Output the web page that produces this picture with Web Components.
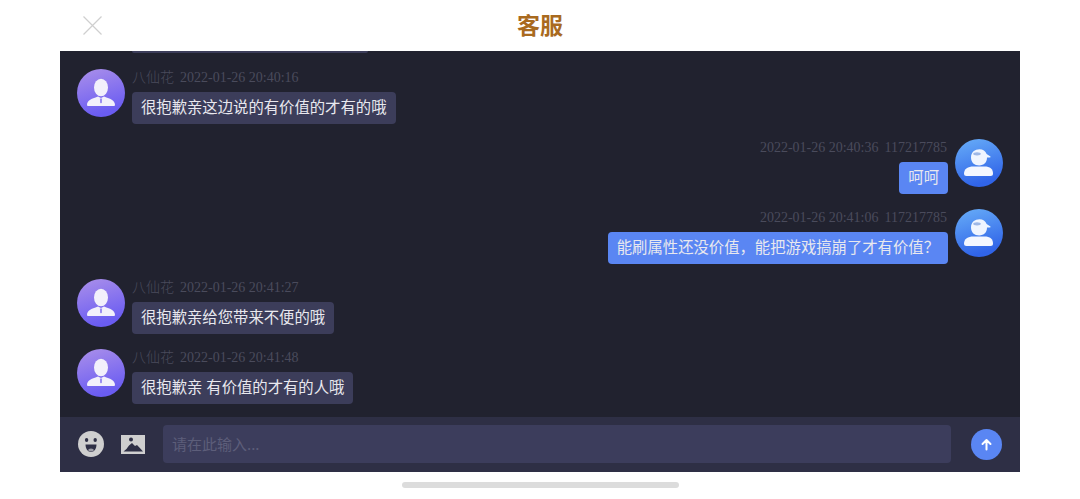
<!DOCTYPE html>
<html lang="zh">
<head>
<meta charset="utf-8">
<title>客服</title>
<style>
    html, body { margin: 0; background: #fff; }
    body { font-family: "Noto Sans CJK SC", "Liberation Sans", sans-serif; height: 499px; overflow: hidden; }
</style>
</head>
<body>
<chat-page>
    <chat-header slot="header">客服</chat-header>
    <chat-message side="left" name="八仙花" time="2022-01-26 20:40:16">很抱歉亲这边说的有价值的才有的哦</chat-message>
    <chat-message side="right" name="117217785" time="2022-01-26 20:40:36">呵呵</chat-message>
    <chat-message side="right" name="117217785" time="2022-01-26 20:41:06">能刷属性还没价值，能把游戏搞崩了才有价值？</chat-message>
    <chat-message side="left" name="八仙花" time="2022-01-26 20:41:27">很抱歉亲给您带来不便的哦</chat-message>
    <chat-message side="left" name="八仙花" time="2022-01-26 20:41:48">很抱歉亲 有价值的才有的人哦</chat-message>
    <chat-input slot="footer"></chat-input>
</chat-page>

<script>
'use strict';

const CJK = '"Noto Sans CJK SC", "Liberation Sans", sans-serif';

/**
 * Outer frame: white page, title on top, dark panel with the log and the input bar.
 */
class ChatPage extends HTMLElement
{
    constructor()
    {
        super();
        this.attachShadow({mode: 'open'}).innerHTML = `
            <style>
                :host { display: flex; flex-direction: column; height: 499px; }
                .panel { margin: 0 60px; height: 421px; display: flex; flex-direction: column; background: #21222f; }
                .log { flex: 1; min-height: 0; overflow: hidden; display: flex; flex-direction: column; gap: 22px; padding: 0 17px; }
                .cut { height: 2px; width: 236px; margin-left: 55px; margin-bottom: -6px; background: #3c3d5a; border-radius: 0 0 4px 4px; flex: none; }
                .home { align-self: center; margin-top: 10px; width: 277px; height: 6px; border-radius: 3px; background: #dcdcdc; }
            </style>
            <slot name="header"></slot>
            <div class="panel">
                <div class="log">
                    <div class="cut"></div>
                    <slot></slot>
                </div>
                <slot name="footer"></slot>
            </div>
            <div class="home"></div>
        `;
    }
}

class ChatHeader extends HTMLElement
{
    constructor()
    {
        super();
        this.attachShadow({mode: 'open'}).innerHTML = `
            <style>
                :host { display: grid; grid-template-columns: 1fr auto 1fr; align-items: center; height: 51px; padding: 0 60px; }
                svg { display: block; margin-left: 22px; }
                .title { font: 700 23px/51px ${CJK}; color: #a96a1f; height: 51px; margin-top: -3px; }
            </style>
            <svg width="21" height="21" viewBox="0 0 21 21" fill="none" stroke="#cfcfcf" stroke-width="1.2">
                <path d="M1.5 1.5 L19.5 19.5 M19.5 1.5 L1.5 19.5"/>
            </svg>
            <div class="title"><slot></slot></div>
            <span></span>
        `;
    }
}

/**
 * Avatar disc. kind "agent" is the purple suit one, "user" the blue one with a cap.
 */
class ChatAvatar extends HTMLElement
{
    constructor()
    {
        super();
        this.attachShadow({mode: 'open'});
    }

    connectedCallback()
    {
        const agent = this.getAttribute('kind') === 'agent';
        const uid = agent ? 'a' : 'u';
        const stops = agent
            ? '<stop offset="0" stop-color="#ab90ea"/><stop offset="1" stop-color="#6a5cf2"/>'
            : '<stop offset="0" stop-color="#68aef8"/><stop offset="1" stop-color="#3064e8"/>';
        const figure = agent
            ? `<ellipse cx="24" cy="18.5" rx="7" ry="8.8" fill="#f2f0fb"/>
               <path d="M10 36 C10 31.5 14 30 21 27.5 L24 29 L27 27.5 C34 30 38 31.5 38 36 Q38 37 37 37 H11 Q10 37 10 36 Z" fill="#f2f0fb"/>
               <path d="M22.9 29.6 H25.1 L24.9 33.5 L24 34.6 L23.1 33.5 Z" fill="#9a8cf0"/>`
            : `<path d="M16 18.5 C16 13 20 10.2 24.5 10.2 C28 10.2 30.5 12 31.6 15 L35.5 17.6 Q36 18.6 34.5 18.6 L32 18.6 C32 23.5 29 26.5 24.2 26.5 C19.5 26.5 16 23.5 16 18.5 Z" fill="#eff5ff"/>
               <ellipse cx="22" cy="14.8" rx="3.8" ry="1.6" fill="#9db7e6"/>
               <path d="M9 34.5 C9 30 13 27.5 18.5 27.5 H29.5 C35 27.5 38 30 38 34.5 Q38 37 35.5 37 H11.5 Q9 37 9 34.5 Z" fill="#f3f7ff"/>`;
        this.shadowRoot.innerHTML = `
            <style>
                :host { display: block; width: 48px; height: 48px; flex: none; }
                svg { display: block; }
            </style>
            <svg width="48" height="48" viewBox="0 0 48 48">
                <defs><linearGradient id="g${uid}" x1="0" y1="0" x2="0.3" y2="1">${stops}</linearGradient></defs>
                <circle cx="24" cy="24" r="24" fill="url(#g${uid})"/>
                ${figure}
            </svg>
        `;
    }
}

/**
 * One chat line. Attributes: side (left|right), name, time; the text is slotted.
 */
class ChatMessage extends HTMLElement
{
    constructor()
    {
        super();
        this.attachShadow({mode: 'open'});
    }

    connectedCallback()
    {
        const right = this.getAttribute('side') === 'right';
        const name = this.getAttribute('name');
        const time = this.getAttribute('time');
        const meta = right
            ? `<span>${time}</span><span>${name}</span>`
            : `<span class="name">${name}</span><span>${time}</span>`;

        this.shadowRoot.innerHTML = `
            <style>
                :host { display: flex; gap: 7px; height: 48px; flex-direction: ${right ? 'row-reverse' : 'row'}; }
                .body { display: flex; flex-direction: column; align-items: ${right ? 'flex-end' : 'flex-start'}; }
                .meta { flex: none; display: flex; gap: 6px; height: 23px; padding-right: ${right ? 1 : 0}px; font: 14px/17px "Liberation Serif", "Noto Sans CJK SC", serif; color: #4a4b5c; }
                .name { font-family: ${CJK}; font-weight: 300; margin-top: -1px; }
                .bubble {
                    flex: none; box-sizing: border-box; height: 32px; padding: 0 9px;
                    font: 15.35px/29px ${CJK}; color: #e8e8ee; white-space: nowrap; word-spacing: 0.5px;
                    border-radius: 4px; background: ${right ? '#5a86f3' : '#3c3d5a'};
                }
            </style>
            <chat-avatar kind="${right ? 'user' : 'agent'}"></chat-avatar>
            <div class="body">
                <div class="meta">${meta}</div>
                <div class="bubble"><slot></slot></div>
            </div>
        `;
    }
}

class ChatInput extends HTMLElement
{
    constructor()
    {
        super();
        this.attachShadow({mode: 'open'}).innerHTML = `
            <style>
                :host { display: flex; align-items: center; height: 55px; padding: 0 18px 1px; background: #2e2f45; box-sizing: border-box; }
                svg { display: block; flex: none; }
                .smile { margin-right: 17px; }
                .pic { margin-right: 18px; }
                .field {
                    flex: 1; height: 38px; border-radius: 4px; background: #3c3d5c; padding: 0 9px; margin-right: 20px;
                    font: 15px/38px ${CJK}; color: #5d5e7a;
                }
                .send { width: 31px; height: 31px; border-radius: 50%; background: #5a86f3; flex: none; display: flex; align-items: center; justify-content: center; }
            </style>
            <svg class="smile" width="26" height="26" viewBox="0 0 26 26">
                <circle cx="13" cy="13" r="13" fill="#cfcfcf"/>
                <ellipse cx="8.6" cy="9" rx="1.7" ry="2" fill="#2e2f45"/>
                <ellipse cx="17.2" cy="9" rx="1.7" ry="2" fill="#2e2f45"/>
                <path d="M7.5 13.5 H18.5 C18.5 18 16 21 13 21 C10 21 7.5 18 7.5 13.5 Z" fill="#2e2f45"/>
                <ellipse cx="13" cy="19" rx="2.8" ry="1.6" fill="#9d9da6"/>
            </svg>
            <svg class="pic" width="24" height="19" viewBox="0 0 24 19">
                <rect width="24" height="19" fill="#cfcfcf"/>
                <circle cx="10" cy="4.5" r="2" fill="#2e2f45"/>
                <path d="M2.5 16.5 Q6 14 8 10.5 L11 8 L14 11 L16 10 Q19.5 13.5 22 16.5 Z" fill="#2e2f45"/>
            </svg>
            <div class="field">请在此输入...</div>
            <div class="send">
                <svg width="13" height="13" viewBox="0 0 13 13" fill="none" stroke="#fff" stroke-width="2" stroke-linecap="round" stroke-linejoin="round">
                    <path d="M6.5 11.5 V2 M2.5 6 L6.5 2 L10.5 6"/>
                </svg>
            </div>
        `;
    }
}

customElements.define('chat-avatar', ChatAvatar);
customElements.define('chat-message', ChatMessage);
customElements.define('chat-header', ChatHeader);
customElements.define('chat-input', ChatInput);
customElements.define('chat-page', ChatPage);
</script>
</body>
</html>
